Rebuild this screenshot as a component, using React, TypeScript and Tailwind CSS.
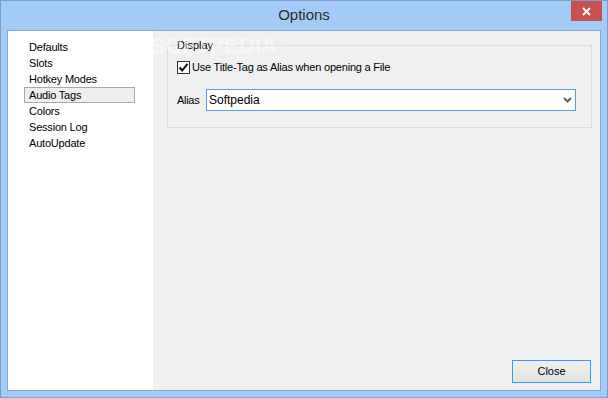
import { useState } from "react";

const pages = [
  "Defaults",
  "Slots",
  "Hotkey Modes",
  "Audio Tags",
  "Colors",
  "Session Log",
  "AutoUpdate",
];

export default function App() {
  const [selected, setSelected] = useState("Audio Tags");
  const [useTitle, setUseTitle] = useState(true);

  return (
    <div
      className="flex h-[398px] w-[608px] flex-col border border-[#7d9cc8] bg-[#a3cbf7] text-[#000]"
      style={{ fontFamily: '"Liberation Sans", Arial, sans-serif' }}
    >
      {/* タイトルバー */}
      <div className="relative flex h-[29px] shrink-0 items-center justify-center">
        <span className="text-[15px] text-[#2b2b2b]">Options</span>
        <button className="absolute right-[5px] top-0 flex h-[20px] w-[31px] items-center justify-center bg-[#c75050]">
          <svg width="9" height="9" viewBox="0 0 9 9">
            <path d="M1 1 L8 8 M8 1 L1 8" stroke="#fff" strokeWidth="2" />
          </svg>
        </button>
      </div>

      {/* クライアント領域 */}
      <div className="mx-[6px] mb-[6px] flex flex-1 border border-[#86a8d2] bg-[#f0f0f0]">
        {/* ページ一覧 */}
        <div className="relative w-[145px] shrink-0 bg-white pt-[8px]">
          {pages.map((p) => (
            <div
              key={p}
              onClick={() => setSelected(p)}
              className={
                "ml-[16px] flex h-[16px] w-[111px] items-center border pl-[4px] text-[11px] tracking-[-0.2px] " +
                (selected === p
                  ? "border-[#a9a9a9] bg-[#eeeeee]"
                  : "border-transparent")
              }
            >
              {p}
            </div>
          ))}
        </div>

        {/* 設定パネル */}
        <div className="relative flex flex-1 flex-col pl-[14px] pr-[8px] pt-[8px]">
          <div className="pointer-events-none absolute left-[-2px] top-[3px] select-none text-[22px] font-bold leading-[24px] text-white opacity-40">
            SOFTPEDIA<sup className="text-[7px]">™</sup>
          </div>
          <fieldset className="border border-[#dcdcdc] px-[9px] pb-[16px] pr-[15px]">
            <legend className="px-0 text-[11px] leading-[13px]">Display</legend>

            <label className="mt-[7px] flex h-[16px] items-center gap-[2px] text-[11px] tracking-[-0.2px]">
              <span
                onClick={() => setUseTitle(!useTitle)}
                className="flex h-[13px] w-[13px] items-center justify-center border border-[#333] bg-white"
              >
                {useTitle && (
                  <svg width="11" height="11" viewBox="0 0 11 11">
                    <path d="M1.5 5.5 L4.2 8.5 L9.5 1.8" fill="none" stroke="#111" strokeWidth="2" />
                  </svg>
                )}
              </span>
              Use Title-Tag as Alias when opening a File
            </label>

            <div className="mt-[14px] flex items-center">
              <span className="w-[29px] text-[11px] tracking-[-0.3px]">Alias</span>
              <div className="flex h-[22px] flex-1 items-center justify-between border border-[#569de5] bg-white pl-[2px] pr-[3px]">
                <span className="text-[12px]">Softpedia</span>
                <svg width="9" height="6" viewBox="0 0 9 6">
                  <path d="M1 1 L4.5 4.5 L8 1" fill="none" stroke="#606060" strokeWidth="2" />
                </svg>
              </div>
            </div>
          </fieldset>

          <div className="mt-auto flex justify-end pb-[7px] pr-[1px]">
            <button className="h-[23px] w-[79px] border border-[#3399ff] bg-gradient-to-b from-[#f0f0f0] to-[#e3e3e3] text-[11px]">
              Close
            </button>
          </div>
        </div>
      </div>
    </div>
  );
}
